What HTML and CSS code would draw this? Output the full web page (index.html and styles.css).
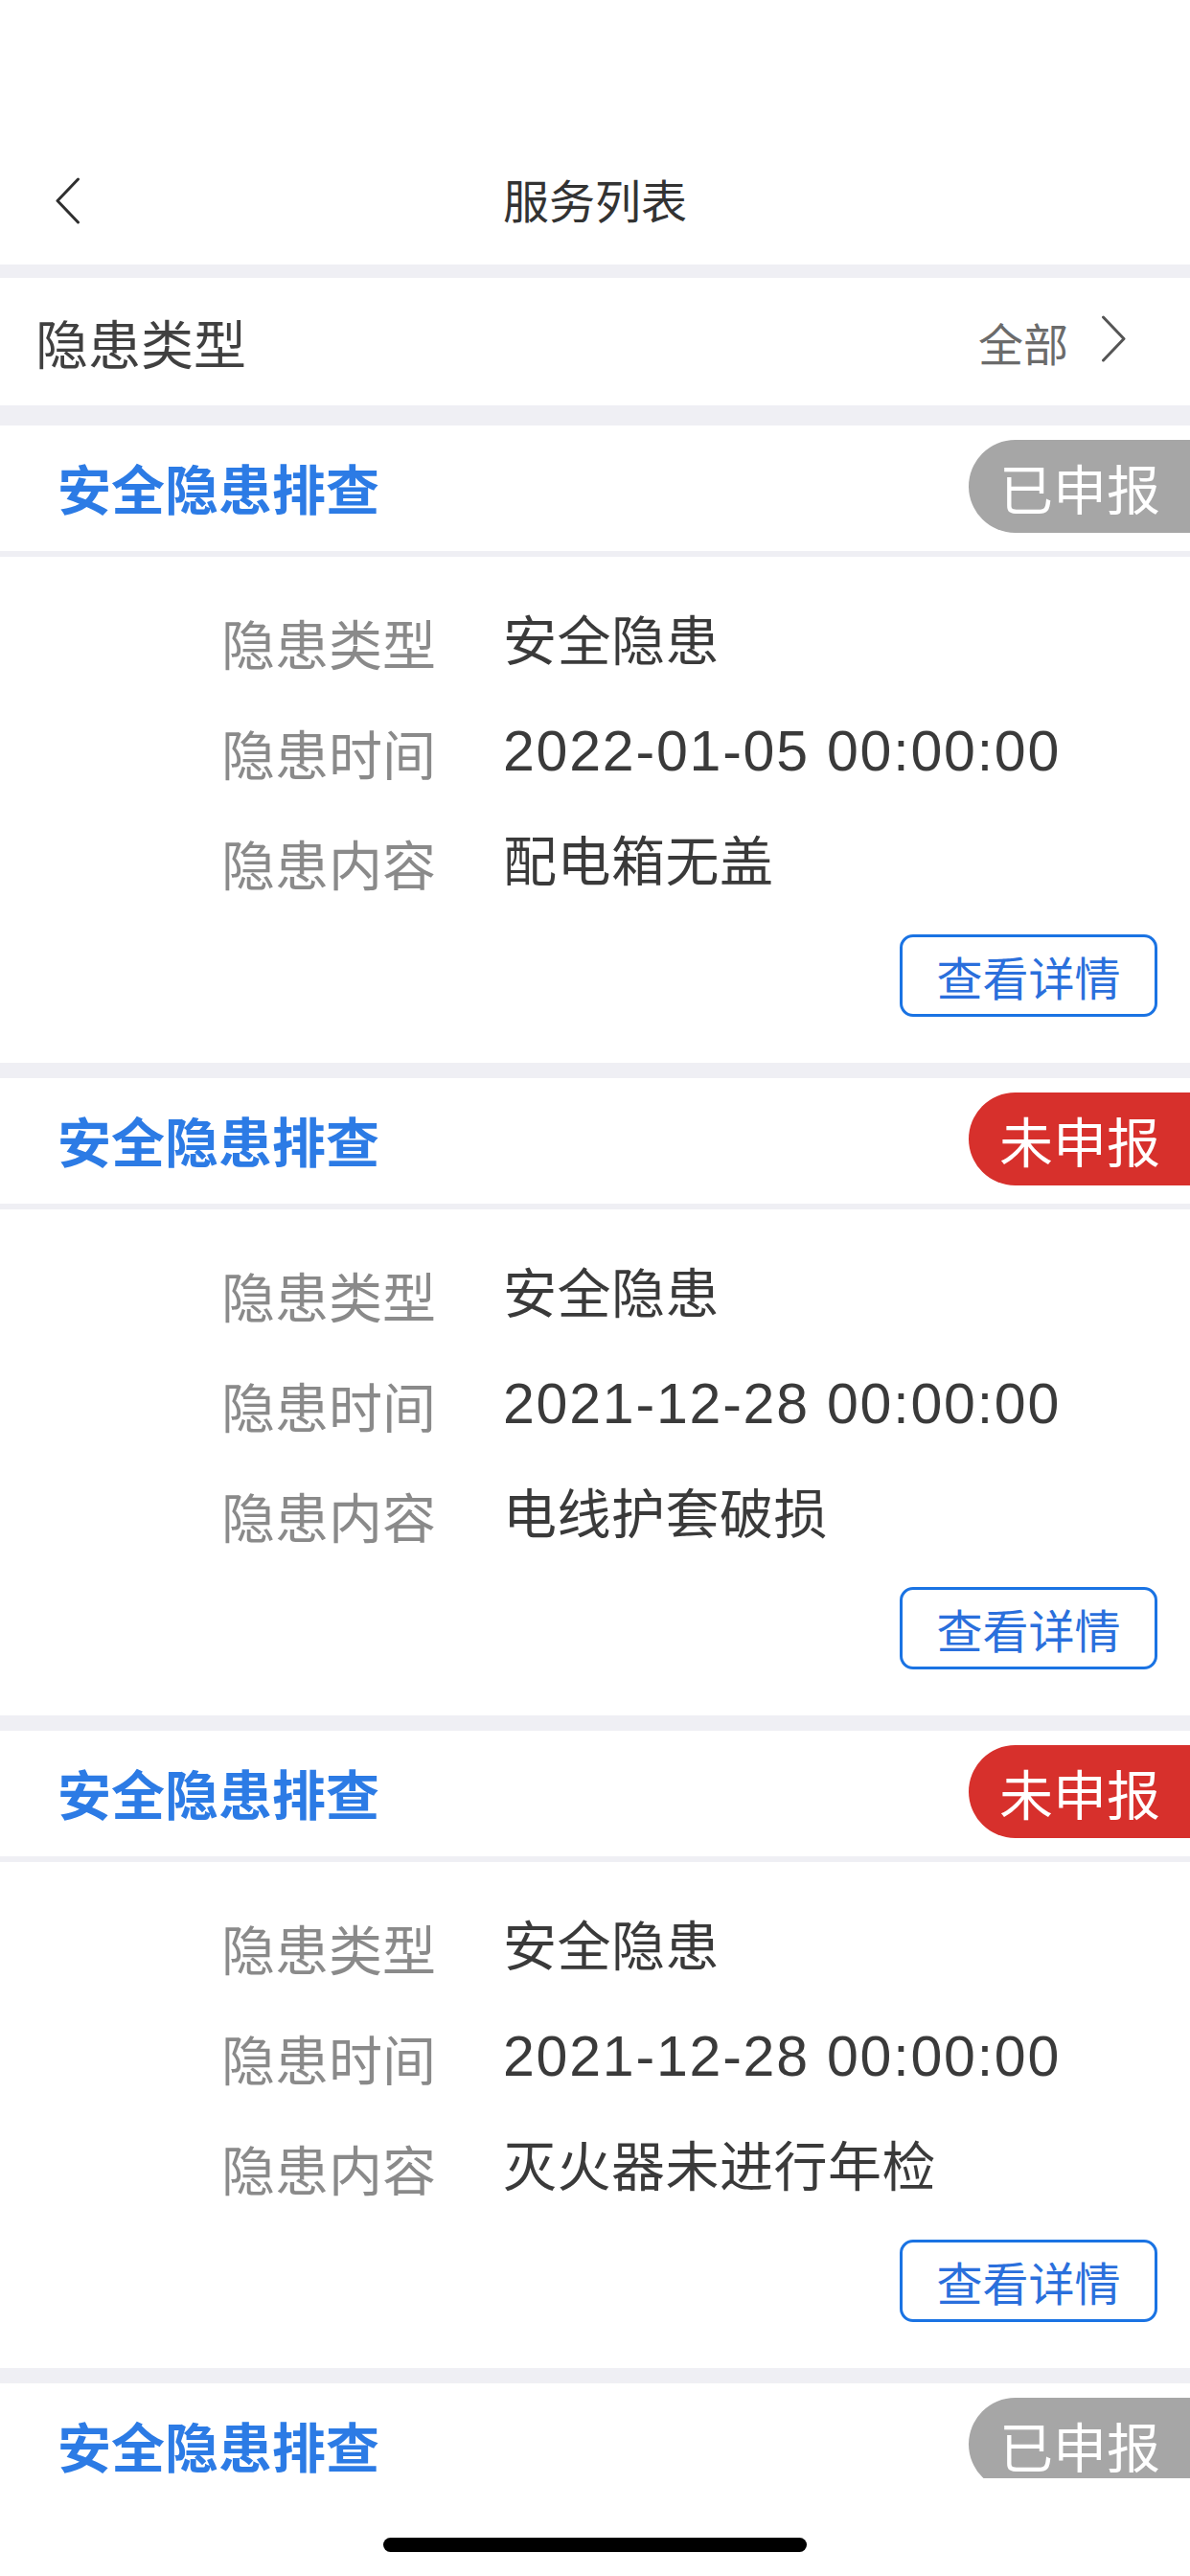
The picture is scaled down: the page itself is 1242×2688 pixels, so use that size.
FILE: index.html
```html
<!DOCTYPE html>
<html lang="zh-CN">
<head>
<meta charset="utf-8">
<title>服务列表</title>
<link rel="stylesheet" href="styles.css">
</head>
<body>
<div class="screen">
  <header class="topbar">
    <div class="navbar">
      <span class="nav-back" aria-label="返回">
        <svg viewBox="0 0 27 49" width="27" height="49"><path d="M24.5 2 L3 24.5 L24.5 47" fill="none" stroke="#2f2f2f" stroke-width="3" stroke-linecap="round" stroke-linejoin="round"/></svg>
      </span>
      <h1 class="nav-title">服务列表</h1>
      <span class="nav-spacer"></span>
    </div>
  </header>

  <main class="viewport">
    <div class="filter-row">
      <span class="filter-label">隐患类型</span>
      <span class="filter-value">全部
        <svg class="chev" viewBox="0 0 27 49" width="27" height="49"><path d="M2.5 2 L24 24.5 L2.5 47" fill="none" stroke="#555" stroke-width="3" stroke-linecap="round" stroke-linejoin="round"/></svg>
      </span>
    </div>

    <div class="list">
      <section class="card">
        <div class="card-head">
          <h2 class="card-title">安全隐患排查</h2>
          <span class="badge badge-done">已申报</span>
        </div>
        <div class="card-body">
          <dl class="fields">
            <dt>隐患类型</dt><dd>安全隐患</dd>
            <dt>隐患时间</dt><dd class="time">2022-01-05 00:00:00</dd>
            <dt>隐患内容</dt><dd>配电箱无盖</dd>
          </dl>
          <div class="actions"><button class="btn-detail">查看详情</button></div>
        </div>
      </section>

      <section class="card">
        <div class="card-head">
          <h2 class="card-title">安全隐患排查</h2>
          <span class="badge badge-todo">未申报</span>
        </div>
        <div class="card-body">
          <dl class="fields">
            <dt>隐患类型</dt><dd>安全隐患</dd>
            <dt>隐患时间</dt><dd class="time">2021-12-28 00:00:00</dd>
            <dt>隐患内容</dt><dd>电线护套破损</dd>
          </dl>
          <div class="actions"><button class="btn-detail">查看详情</button></div>
        </div>
      </section>

      <section class="card">
        <div class="card-head">
          <h2 class="card-title">安全隐患排查</h2>
          <span class="badge badge-todo">未申报</span>
        </div>
        <div class="card-body">
          <dl class="fields">
            <dt>隐患类型</dt><dd>安全隐患</dd>
            <dt>隐患时间</dt><dd class="time">2021-12-28 00:00:00</dd>
            <dt>隐患内容</dt><dd>灭火器未进行年检</dd>
          </dl>
          <div class="actions"><button class="btn-detail">查看详情</button></div>
        </div>
      </section>

      <section class="card card-partial">
        <div class="card-head">
          <h2 class="card-title">安全隐患排查</h2>
          <span class="badge badge-done">已申报</span>
        </div>
      </section>
    </div>
  </main>

  <footer class="home-area"><span class="home-indicator"></span></footer>
</div>
</body>
</html>
```

FILE: styles.css
```css
* { box-sizing: border-box; }

html, body {
  margin: 0;
  padding: 0;
  background: #ffffff;
}

body {
  font-family: "Noto Sans CJK SC", "Noto Sans", sans-serif;
  color: #333333;
}

.screen {
  width: 1242px;
  height: 2688px;
  display: flex;
  flex-direction: column;
  overflow: hidden;
  background: #ffffff;
}

/* top navigation */
.topbar {
  padding-top: 143px;
  background: #ffffff;
  flex: none;
}

.navbar {
  height: 133px;
  display: grid;
  grid-template-columns: 1fr auto 1fr;
  align-items: center;
  padding: 0 56px;
}

.nav-back {
  display: flex;
  align-items: center;
  padding-left: 1px;
}

.nav-title {
  margin: -6px 0 0 0;
  font-size: 48px;
  font-weight: 400;
  color: #333333;
  line-height: 1;
  text-align: center;
}

/* scrolling area */
.viewport {
  height: 2310px;
  flex: none;
  overflow: hidden;
  background: #efeff4;
  padding-top: 14px;
}

.filter-row {
  height: 133px;
  background: #ffffff;
  display: flex;
  align-items: center;
  justify-content: space-between;
  padding: 0 66px 0 37px;
  margin-bottom: 21px;
}

.filter-label {
  font-size: 55px;
  color: #404040;
  line-height: 1;
}

.filter-value {
  display: flex;
  align-items: center;
  gap: 34px;
  font-size: 47px;
  color: #6b6b6b;
  line-height: 1;
}

.chev { display: block; margin-top: -6px; }

.list {
  display: flex;
  flex-direction: column;
  gap: 16px;
}

.card {
  background: #ffffff;
  overflow: hidden;
}

.card-head {
  height: 137px;
  display: flex;
  align-items: center;
  justify-content: space-between;
  padding-left: 60px;
  border-bottom: 6px solid #efeff4;
}

.card-head .card-title { margin-top: -4px; }
.card-head .badge { margin-top: -4px; }

.card-partial .card-head { border-bottom-color: #ffffff; }

.card-title {
  margin: 0;
  font-size: 56px;
  font-weight: 700;
  color: #2c7be5;
  line-height: 1;
}

.badge {
  height: 97px;
  display: flex;
  align-items: center;
  padding: 0 31px 0 32px;
  border-radius: 49px 0 0 49px;
  color: #ffffff;
  font-size: 56px;
  line-height: 1;
}

.badge-done { background: #a6a6a6; }
.badge-todo { background: #d7302c; }

.card-body {
  padding: 31px 34px 48px 0;
}

.fields {
  margin: 0;
  display: grid;
  grid-template-columns: 455px 1fr;
  column-gap: 70px;
  font-size: 56px;
  line-height: 115px;
}

.fields dt {
  text-align: right;
  color: #8a8a8a;
}

.fields dd {
  margin: 0;
  color: #3a3a3a;
  white-space: nowrap;
  font-family: "Liberation Sans", "Noto Sans CJK SC", sans-serif;
  letter-spacing: 0.5px;
}

.fields dd.time {
  font-size: 59px;
  letter-spacing: 1.8px;
}

.actions {
  display: flex;
  justify-content: flex-end;
  margin-top: 18px;
}

.btn-detail {
  width: 269px;
  height: 86px;
  border: 3px solid #1a73e3;
  border-radius: 14px;
  background: #ffffff;
  color: #2a6fdc;
  font-family: "Noto Sans CJK SC", "Noto Sans", sans-serif;
  font-size: 48px;
  line-height: 1;
  padding: 0;
}

/* bottom safe area */
.home-area {
  flex: 1;
  background: #ffffff;
  display: flex;
  justify-content: center;
  padding-top: 62px;
}

.home-indicator {
  width: 442px;
  height: 15px;
  border-radius: 8px;
  background: #000000;
}
```
